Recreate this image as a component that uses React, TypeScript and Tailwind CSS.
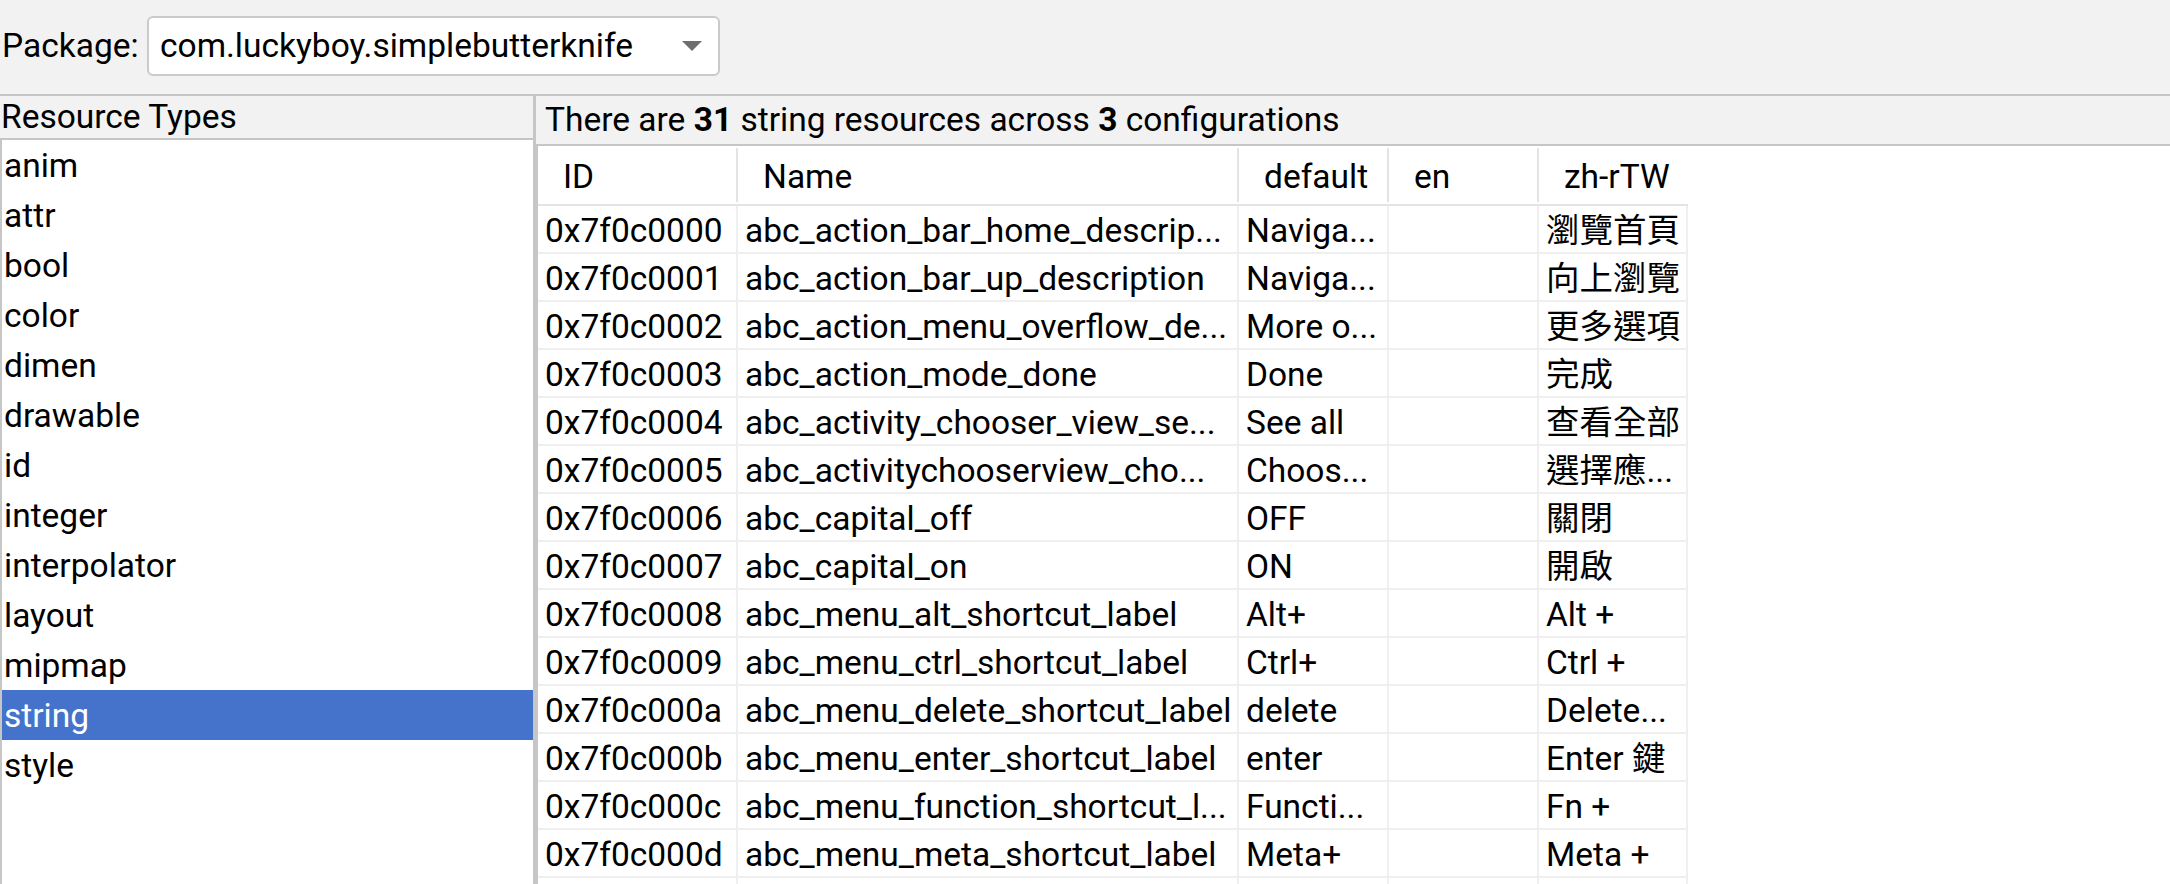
import React from 'react';

type Row = Readonly<{
  id: string;
  name: string;
  def: string;
  en: string;
  zh: string;
}>;

const resourceTypes = [
  'anim',
  'attr',
  'bool',
  'color',
  'dimen',
  'drawable',
  'id',
  'integer',
  'interpolator',
  'layout',
  'mipmap',
  'string',
  'style',
];

const rows: Row[] = [
  { id: '0x7f0c0000', name: 'abc_action_bar_home_descrip...', def: 'Naviga...', en: '', zh: '瀏覽首頁' },
  { id: '0x7f0c0001', name: 'abc_action_bar_up_description', def: 'Naviga...', en: '', zh: '向上瀏覽' },
  { id: '0x7f0c0002', name: 'abc_action_menu_overflow_de...', def: 'More o...', en: '', zh: '更多選項' },
  { id: '0x7f0c0003', name: 'abc_action_mode_done', def: 'Done', en: '', zh: '完成' },
  { id: '0x7f0c0004', name: 'abc_activity_chooser_view_se...', def: 'See all', en: '', zh: '查看全部' },
  { id: '0x7f0c0005', name: 'abc_activitychooserview_cho...', def: 'Choos...', en: '', zh: '選擇應...' },
  { id: '0x7f0c0006', name: 'abc_capital_off', def: 'OFF', en: '', zh: '關閉' },
  { id: '0x7f0c0007', name: 'abc_capital_on', def: 'ON', en: '', zh: '開啟' },
  { id: '0x7f0c0008', name: 'abc_menu_alt_shortcut_label', def: 'Alt+', en: '', zh: 'Alt +' },
  { id: '0x7f0c0009', name: 'abc_menu_ctrl_shortcut_label', def: 'Ctrl+', en: '', zh: 'Ctrl +' },
  { id: '0x7f0c000a', name: 'abc_menu_delete_shortcut_label', def: 'delete', en: '', zh: 'Delete...' },
  { id: '0x7f0c000b', name: 'abc_menu_enter_shortcut_label', def: 'enter', en: '', zh: 'Enter 鍵' },
  { id: '0x7f0c000c', name: 'abc_menu_function_shortcut_l...', def: 'Functi...', en: '', zh: 'Fn +' },
  { id: '0x7f0c000d', name: 'abc_menu_meta_shortcut_label', def: 'Meta+', en: '', zh: 'Meta +' },
  // next row only shows its top border at the bottom edge
  { id: '', name: '', def: '', en: '', zh: '' },
];

const headers = ['Name', 'default', 'en', 'zh-rTW'];

const cell =
  'h-[48px] flex items-center px-[7px] pt-[4px] whitespace-nowrap overflow-hidden border-b-2 border-[#efefef]';

const ResourceList: React.FC = () => {
  return (
    <div className="w-[533px] flex flex-col">
      <div className="h-[42px] shrink-0 flex items-center pl-[1px]">Resource Types</div>
      <div className="flex-1 bg-white border-l-2 border-t-2 border-[#c6c6c6]">
        {resourceTypes.map((t) =>
          t === 'string' ? (
            <div key={t} className="h-[50px] flex items-center pl-[2px] pt-[2px] bg-[#4573cc] text-white">
              {t}
            </div>
          ) : (
            <div key={t} className="h-[50px] flex items-center pl-[2px] pt-[2px]">
              {t}
            </div>
          ),
        )}
      </div>
    </div>
  );
};

const StringTable: React.FC = () => {
  return (
    <div className="flex-1 flex flex-col min-h-0">
      <div className="h-[50px] shrink-0 flex items-center pl-[9px] border-b-2 border-[#c6c6c6]">
        There are&nbsp;<span className="font-bold">31</span>&nbsp;string resources across&nbsp;
        <span className="font-bold">3</span>&nbsp;configurations
      </div>
      <div className="flex-1 min-h-0 overflow-hidden bg-white border-l-2 border-[#c6c6c6]">
        <div className="grid grid-cols-[198px_501px_150px_150px_151px]">
          <div className="h-[60px] flex items-center pl-[25px] pt-[4px] border-b-2 border-[#e4e4e4]">ID</div>
          {headers.map((h) => (
            <div key={h} className="h-[60px] flex items-center whitespace-nowrap border-b-2 border-[#e4e4e4]">
              <div className="w-[2px] h-[54px] bg-[#e4e4e4]" />
              <span className="pl-[25px] pt-[4px]">{h}</span>
            </div>
          ))}
          {rows.map((r, i) => (
            <React.Fragment key={i}>
              <div className={cell}>{r.id}</div>
              <div className={cell + ' border-l-2'}>{r.name}</div>
              <div className={cell + ' border-l-2'}>{r.def}</div>
              <div className={cell + ' border-l-2'}>{r.en}</div>
              <div className={cell + ' border-l-2 border-r-2'}>{r.zh}</div>
            </React.Fragment>
          ))}
        </div>
      </div>
    </div>
  );
};

export default function App() {
  return (
    <div className="w-[2170px] h-[884px] overflow-hidden bg-[#f2f2f2] text-black text-[33.5px] leading-none font-[family-name:Roboto,'Noto_Sans_CJK_TC',sans-serif] flex flex-col">
      <div className="h-[96px] shrink-0 flex items-center border-b-2 border-[#c6c6c6] pb-[2px]">
        <span className="pl-[2px] w-[147px]">Package:</span>
        <div className="w-[573px] h-[60px] bg-white border-2 border-[#cacaca] rounded-[6px] flex items-center justify-between pl-[11px] pr-[16px]">
          <span>com.luckyboy.simplebutterknife</span>
          <svg width="20" height="10" viewBox="0 0 20 10">
            <path d="M0 0 L20 0 L10 10 Z" fill="#6e6e6e" />
          </svg>
        </div>
      </div>
      <div className="flex-1 flex min-h-0">
        <ResourceList />
        <div className="w-[3px] bg-[#c6c6c6]" />
        <StringTable />
      </div>
    </div>
  );
}
